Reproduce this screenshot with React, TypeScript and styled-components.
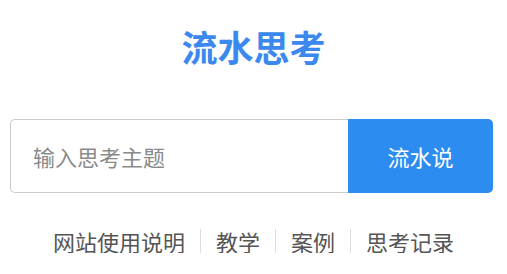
import React from "react";
import styled, { createGlobalStyle } from "styled-components";

const GlobalStyle = createGlobalStyle`
  html, body {
    margin: 0;
    padding: 0;
    background: #fff;
    font-family: "Noto Sans CJK SC", "Noto Sans", sans-serif;
  }
`;

const colors = {
  primary: "#2d8cf0",
  title: "#3b88ef",
  border: "#cccccc",
  text: "#555555",
  placeholder: "#8a8a8a",
  divider: "#dddddd",
};

const Page = styled.div`
  width: 507px;
  display: flex;
  flex-direction: column;
  align-items: center;
`;

const Title = styled.h1`
  margin: 28px 0 0;
  font-size: 36px;
  line-height: 36px;
  font-weight: 700;
  color: ${colors.title};
`;

const SearchForm = styled.form`
  align-self: flex-start;
  margin: 55px 0 0 10px;
  width: 483px;
  height: 74px;
  display: flex;
`;

const TopicInput = styled.input`
  flex: 1;
  min-width: 0;
  box-sizing: border-box;
  height: 100%;
  padding: 0 22px;
  border: 1px solid ${colors.border};
  border-right: none;
  border-radius: 5px 0 0 5px;
  font-family: inherit;
  font-size: 22px;
  color: #333;
  outline: none;

  &::placeholder {
    color: ${colors.placeholder};
  }
`;

const SubmitButton = styled.button`
  width: 145px;
  height: 100%;
  border: none;
  border-radius: 0 5px 5px 0;
  background: ${colors.primary};
  color: #fff;
  font-family: inherit;
  font-size: 22px;
  cursor: pointer;
`;

const LinkRow = styled.nav`
  margin-top: 36px;
  display: flex;
  align-items: center;
`;

const NavLink = styled.a<{ $first?: boolean }>`
  font-size: 22px;
  line-height: 24px;
  color: ${colors.text};
  text-decoration: none;
  padding: 0 15px;
  border-left: ${(p) => (p.$first ? "none" : `1px solid ${colors.divider}`)};
`;

const links = ["网站使用说明", "教学", "案例", "思考记录"];

const App: React.FC = () => (
  <>
    <GlobalStyle />
    <Page>
      <Title>流水思考</Title>
      <SearchForm onSubmit={(e) => e.preventDefault()}>
        <TopicInput placeholder="输入思考主题" />
        <SubmitButton type="submit">流水说</SubmitButton>
      </SearchForm>
      <LinkRow>
        {links.map((label, i) => (
          <NavLink key={label} href="#" $first={i === 0}>
            {label}
          </NavLink>
        ))}
      </LinkRow>
    </Page>
  </>
);

export default App;
